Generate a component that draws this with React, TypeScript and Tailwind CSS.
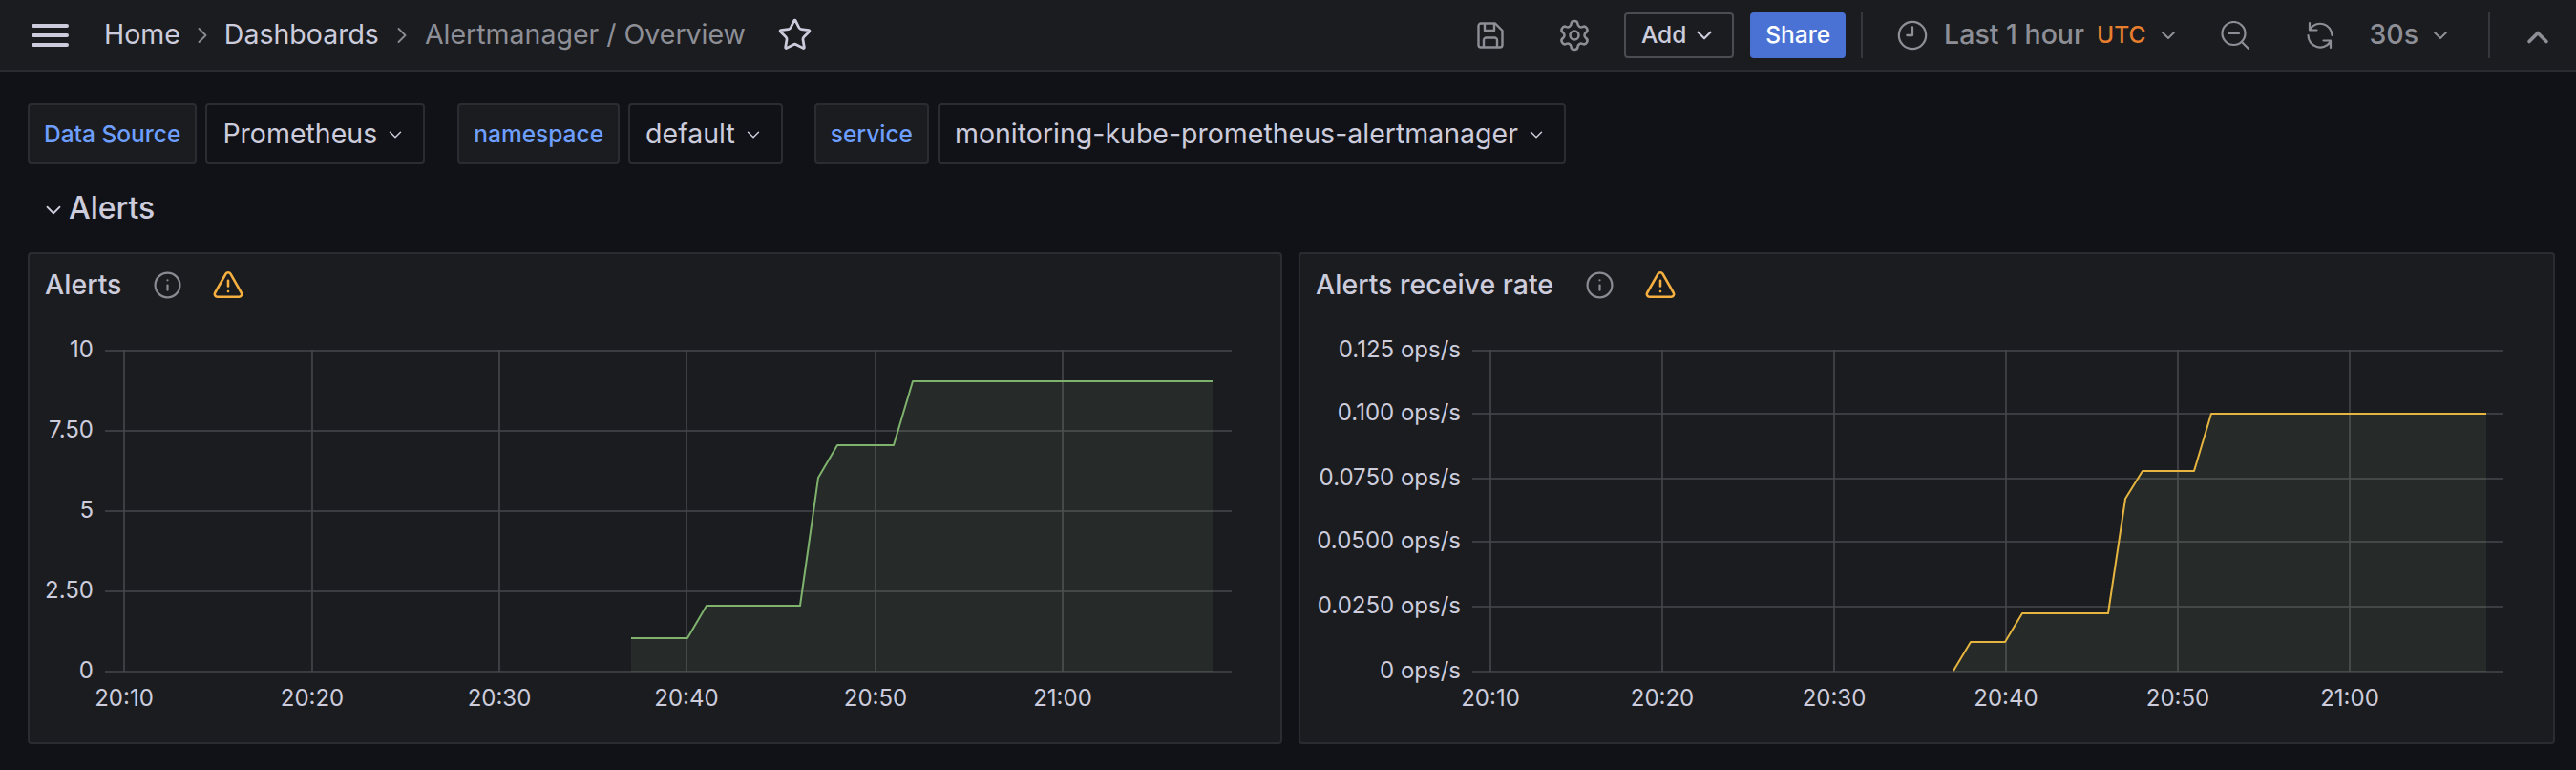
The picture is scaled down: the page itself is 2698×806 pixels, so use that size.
import { ChevronDown, ChevronUp, ChevronRight, Clock9, Info, Settings, Star, TriangleAlert } from "lucide-react";

interface ChartProps {
  viewBox: string;
  xTicks: number[];
  xLabels: string[];
  yTicks: { y: number; label: string }[];
  lineStart: number;
  lineEnd: number;
  labelRight: number;
  points: [number, number][];
  color: string;
  base: number;
}

function Chart({ viewBox, xTicks, xLabels, yTicks, lineStart, lineEnd, labelRight, points, color, base }: ChartProps) {
  const line = points.map(([x, y]) => `${x},${y}`).join(" ");
  const first = points[0][0];
  const last = points[points.length - 1][0];

  return (
    <svg viewBox={viewBox} className="block h-[447px] w-full">
      {yTicks.map((t) => (
        <line key={t.y} x1={lineStart} x2={lineEnd} y1={t.y} y2={t.y} stroke="#46474c" strokeWidth="1.6" />
      ))}
      {xTicks.map((x) => (
        <line key={x} x1={x} x2={x} y1={366} y2={703} stroke="#46474c" strokeWidth="1.6" />
      ))}
      <polygon points={`${first},${base} ${line} ${last},${base}`} fill="#bcd79d" fillOpacity="0.08" />
      <polyline points={line} fill="none" stroke={color} strokeWidth="2" strokeLinejoin="round" />
      {yTicks.map((t) => (
        <text key={t.label} x={labelRight} y={t.y - 1.5} textAnchor="end" dominantBaseline="central" fill="#ccccdc" className="text-[24px]">
          {t.label}
        </text>
      ))}
      {xLabels.map((label, i) => (
        <text key={label} x={xTicks[i]} y={730.5} textAnchor="middle" dominantBaseline="central" fill="#ccccdc" className="text-[24px]">
          {label}
        </text>
      ))}
    </svg>
  );
}

function VariablePicker({ label, value, className }: { label: string; value: string; className?: string }) {
  return (
    <div className={`flex h-16 items-center gap-[9px] ${className ?? ""}`}>
      <div className="flex h-full items-center rounded border-2 border-[#2b2c31] bg-[#1a1c20] px-[15px] text-[24.5px] font-medium text-[#6e9fff]">
        {label}
      </div>
      <div className="flex h-full items-center gap-[8px] rounded border-2 border-[#2b2c31] bg-[#111217] pl-[16px] pr-[18px] text-[28.5px] text-[#ccccdc]">
        {value}
        <ChevronDown className="mt-[2px] h-[22px] w-[22px]" strokeWidth={1.6} />
      </div>
    </div>
  );
}

function PanelHeader({ title }: { title: string }) {
  return (
    <div className="flex h-16 items-center pl-[16px] text-[28.5px] font-medium text-[#ccccdc]">
      {title}
      <Info className="ml-[33px] h-[31px] w-[31px] text-[#8a8b92]" strokeWidth={1.7} />
      <TriangleAlert className="ml-[31px] h-[34px] w-[34px] text-[#f5b040]" strokeWidth={1.8} />
    </div>
  );
}

export default function App() {
  return (
    <div className="min-h-[806px] bg-[#111217] font-['Inter',sans-serif]">
      <header className="flex h-[75px] items-center border-b-2 border-[#2b2c31] bg-[#1a1c20] pl-[33px] pr-[22px]">
        <div className="flex w-[39px] flex-col gap-[6px]">
          <span className="h-[4px] rounded-sm bg-[#ccccdc]" />
          <span className="h-[4px] rounded-sm bg-[#ccccdc]" />
          <span className="h-[4px] rounded-sm bg-[#ccccdc]" />
        </div>
        <nav className="ml-[37px] flex items-center text-[28.5px] text-[#ccccdc]">
          <span>Home</span>
          <ChevronRight className="mx-[9px] h-[28px] w-[28px] text-[#8a8b92]" strokeWidth={1.6} />
          <span>Dashboards</span>
          <ChevronRight className="mx-[10px] h-[28px] w-[28px] text-[#8a8b92]" strokeWidth={1.6} />
          <span className="text-[#8e8f96]">Alertmanager / Overview</span>
        </nav>
        <Star className="ml-[33px] h-[37px] w-[37px] text-[#ccccdc]" strokeWidth={1.8} />

        <div className="ml-auto flex items-center text-[#8e8f96]">
          <svg viewBox="0 0 28 28" className="h-[28px] w-[28px]" fill="none" stroke="currentColor" strokeWidth="2.4" strokeLinejoin="round">
            <path d="M4 1.500h15l7.500 7.500v15a2.500 2.500 0 0 1-2.500 2.500H4A2.500 2.500 0 0 1 1.500 24V4A2.500 2.500 0 0 1 4 1.500z" />
            <path d="M8 2v7h10V2M7 26.500V19a2.500 2.500 0 0 1 2.500-2.500h9A2.500 2.500 0 0 1 21 19v7.500" />
          </svg>
          <Settings className="ml-[56px] h-[36px] w-[36px]" strokeWidth={1.7} />
          <div className="ml-[34px] flex h-12 w-[115px] items-center justify-center gap-[6px] rounded border-2 border-[#4b4c52] text-[24.5px] font-medium text-[#ccccdc]">
            Add
            <ChevronDown className="h-[26px] w-[26px]" strokeWidth={2} />
          </div>
          <div className="ml-[17px] flex h-12 w-[100px] items-center justify-center rounded bg-[#4a72d4] text-[24.5px] font-medium text-white">
            Share
          </div>
          <span className="ml-[16px] h-12 w-[2px] bg-[#36373c]" />
          <Clock9 className="ml-[35px] h-[34px] w-[34px]" strokeWidth={1.6} />
          <span className="ml-[16px] text-[28.5px] font-medium">Last 1 hour</span>
          <span className="ml-[13px] text-[24.5px] font-medium text-[#e67e2e]">UTC</span>
          <ChevronDown className="ml-[12px] h-[24px] w-[24px]" strokeWidth={2} />
          <svg viewBox="0 0 30 30" className="ml-[43px] h-[30px] w-[30px]" fill="none" stroke="currentColor" strokeWidth="2.2" strokeLinecap="round">
            <circle cx="13.500" cy="13" r="12" />
            <path d="M8 13h11M22.500 22.500 29 29" />
          </svg>
          <svg viewBox="0 0 30 30" className="ml-[59px] h-[30px] w-[30px]" fill="none" stroke="currentColor" strokeWidth="2.2" strokeLinecap="round" strokeLinejoin="round">
            <path d="M4 2v7.500h7.500M4.500 8.500A12.500 12.500 0 0 1 27.500 15" />
            <path d="M26 28v-7.500h-7.500M2.500 15A12.500 12.500 0 0 0 25.500 21.800" />
          </svg>
          <span className="ml-[36px] text-[28.5px] font-medium">30s</span>
          <ChevronDown className="ml-[11px] h-[24px] w-[24px]" strokeWidth={2} />
          <span className="ml-[38px] h-12 w-[2px] bg-[#36373c]" />
          <ChevronUp className="ml-[32px] mt-[4px] h-[36px] w-[36px]" strokeWidth={2.4} />
        </div>
      </header>

      <div className="pl-[29px] pt-[33px]">
        <div className="flex items-center">
          <VariablePicker label="Data Source" value="Prometheus" />
          <VariablePicker label="namespace" value="default" className="ml-[34px]" />
          <VariablePicker label="service" value="monitoring-kube-prometheus-alertmanager" className="ml-[33px]" />
        </div>

        <div className="flex h-[92px] items-center pl-[14px] text-[32px] font-medium text-[#ccccdc]">
          <ChevronDown className="mr-[3px] mt-[4px] h-[26px] w-[26px]" strokeWidth={1.7} />
          Alerts
        </div>

        <div className="flex gap-[17px]">
          <section className="h-[515px] w-[1314px] shrink-0 rounded border-2 border-[#2b2c31] bg-[#1a1c20]">
            <PanelHeader title="Alerts" />
            <Chart
              viewBox="31 330 1310 447"
              xTicks={[130, 327, 523, 719, 917, 1113]}
              xLabels={["20:10", "20:20", "20:30", "20:40", "20:50", "21:00"]}
              yTicks={[
                { y: 367, label: "10" },
                { y: 451, label: "7.50" },
                { y: 535, label: "5" },
                { y: 619, label: "2.50" },
                { y: 703, label: "0" },
              ]}
              lineStart={110}
              lineEnd={1290}
              labelRight={98}
              base={703}
              color="#7eb26d"
              points={[
                [661, 668],
                [720, 668],
                [740, 634],
                [838, 634],
                [857, 500],
                [877, 466],
                [936, 466],
                [956, 399],
                [1270, 399],
              ]}
            />
          </section>

          <section className="h-[515px] w-[1316px] shrink-0 rounded border-2 border-[#2b2c31] bg-[#1a1c20]">
            <PanelHeader title="Alerts receive rate" />
            <Chart
              viewBox="1362 330 1312 447"
              xTicks={[1561, 1741, 1921, 2101, 2281, 2461]}
              xLabels={["20:10", "20:20", "20:30", "20:40", "20:50", "21:00"]}
              yTicks={[
                { y: 367, label: "0.125 ops/s" },
                { y: 433, label: "0.100 ops/s" },
                { y: 501, label: "0.0750 ops/s" },
                { y: 567, label: "0.0500 ops/s" },
                { y: 635, label: "0.0250 ops/s" },
                { y: 703, label: "0 ops/s" },
              ]}
              lineStart={1542}
              lineEnd={2622}
              labelRight={1530}
              base={703}
              color="#e5b53f"
              points={[
                [2046, 702],
                [2064, 672],
                [2100, 672],
                [2118, 642],
                [2208, 642],
                [2226, 522],
                [2244, 493],
                [2298, 493],
                [2316, 433],
                [2604, 433],
              ]}
            />
          </section>
        </div>
      </div>
    </div>
  );
}
